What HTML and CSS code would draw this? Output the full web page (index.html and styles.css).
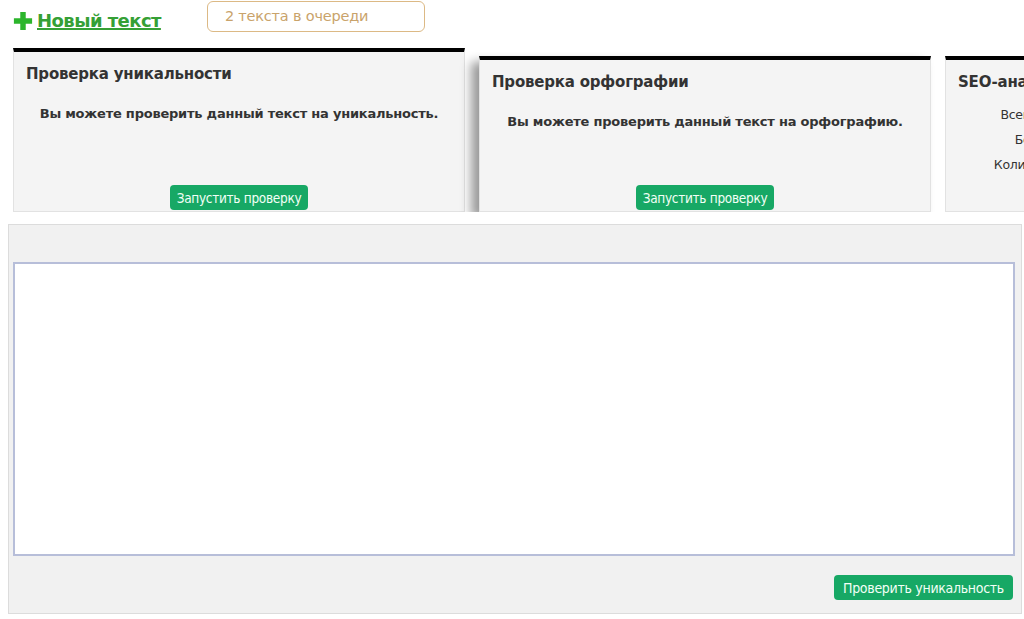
FILE: index.html
```html
<!DOCTYPE html>
<html lang="ru">
<head>
  <meta charset="UTF-8" />
  <meta name="viewport" content="width=device-width, initial-scale=1.0"/>
  <title>Проверка текста</title>
  <link rel="stylesheet" href="styles.css">
</head>
<body>
  <header class="topbar">
    <a href="#" class="new-text">
      <svg class="plus" viewBox="0 0 22 22" width="22" height="20">
        <path d="M8 1h6v7h7v6h-7v7H8v-7H1V8h7z" fill="#2cb52c"/>
      </svg>
      <span>Новый текст</span>
    </a>
    <div class="queue">2 текста в очереди</div>
  </header>

  <div class="checks">
    <div class="check-card">
      <h3>Проверка уникальности</h3>
      <p class="lead">Вы можете проверить данный текст на уникальность.</p>
      <div class="card-actions">
        <button class="btn">Запустить проверку</button>
      </div>
    </div>

    <div class="check-card shifted shadowed">
      <h3>Проверка орфографии</h3>
      <p class="lead">Вы можете проверить данный текст на орфографию.</p>
      <div class="card-actions">
        <button class="btn">Запустить проверку</button>
      </div>
    </div>

    <div class="check-card shifted">
      <h3>SEO-анализ текста</h3>
      <div class="stats">
        <span class="label">Всего символов:</span><span>0</span>
        <span class="label">Без пробелов:</span><span>0</span>
        <span class="label">Количество слов:</span><span>0</span>
      </div>
    </div>
  </div>

  <section class="editor">
    <textarea class="text-input" autofocus></textarea>
    <div class="editor-actions">
      <button class="btn btn-wide">Проверить уникальность</button>
    </div>
  </section>
</body>
</html>
```

FILE: styles.css
```css
* {
  margin: 0;
  padding: 0;
  box-sizing: border-box;
}

body {
  font-family: "DejaVu Sans", Verdana, sans-serif;
  background: #ffffff;
  color: #333;
}

.topbar {
  height: 48px;
  display: flex;
  align-items: flex-start;
  padding-left: 12px;
}

.new-text {
  display: flex;
  align-items: center;
  margin-top: 10px;
  color: #35a035;
  font-weight: bold;
  font-size: 18px;
  letter-spacing: -0.55px;
}

.new-text .plus {
  margin-right: 3px;
}

.new-text span {
  text-decoration: underline;
  text-underline-offset: 2px;
}

.queue {
  margin-left: 46px;
  margin-top: 1px;
  width: 218px;
  height: 31px;
  border: 1px solid #dcb985;
  border-radius: 6px;
  padding-left: 17px;
  line-height: 29px;
  font-size: 14.5px;
  color: #c9a36b;
  letter-spacing: -0.2px;
}

.checks {
  display: flex;
  gap: 14px;
  height: 164px;
  padding-left: 13px;
  overflow: hidden;
}

.check-card {
  flex: 0 0 452px;
  display: flex;
  flex-direction: column;
  background: #f4f4f4;
  border: 1px solid #e2e2e2;
  border-top: 4px solid #000;
  padding: 12px 12px 1px;
}

.check-card.shifted {
  margin-top: 8px;
}

.check-card.shadowed {
  box-shadow: -8px 6px 10px rgba(0, 0, 0, 0.4);
}

.check-card h3 {
  font-size: 15px;
  line-height: 20px;
  color: #333;
  letter-spacing: -0.2px;
}

.lead {
  margin-top: 21px;
  text-align: center;
  font-weight: bold;
  font-size: 13px;
  line-height: 18px;
  letter-spacing: -0.22px;
}

.card-actions {
  margin-top: auto;
  text-align: center;
}

.btn {
  font-family: "DejaVu Sans Condensed", "DejaVu Sans", sans-serif;
  background: #17a865;
  color: #f2fff6;
  border: none;
  border-radius: 4px;
  height: 25px;
  padding: 0 7px;
  font-size: 13.5px;
  letter-spacing: -0.3px;
  cursor: pointer;
}

.btn-wide {
  padding: 0 9px;
  font-size: 14px;
}

.stats {
  display: grid;
  grid-template-columns: 146px auto;
  column-gap: 6px;
  row-gap: 7px;
  margin-top: 14px;
  font-size: 12.5px;
  line-height: 18px;
  letter-spacing: -0.3px;
}

.stats .label {
  text-align: right;
}

.editor {
  margin: 12px 2px 5px 8px;
  height: 390px;
  background: #f1f1f1;
  border: 1px solid #dcdcdc;
  padding: 37px 6px 0 4px;
}

.text-input {
  display: block;
  width: 100%;
  height: 294px;
  border: 2px solid #b7bed9;
  background: #fff;
  resize: none;
  outline: none;
  padding: 12px;
  font-family: "DejaVu Sans", sans-serif;
  font-size: 14px;
  caret-color: #000;
}

.editor-actions {
  display: flex;
  justify-content: flex-end;
  margin-top: 19px;
  padding-right: 2px;
}
```
